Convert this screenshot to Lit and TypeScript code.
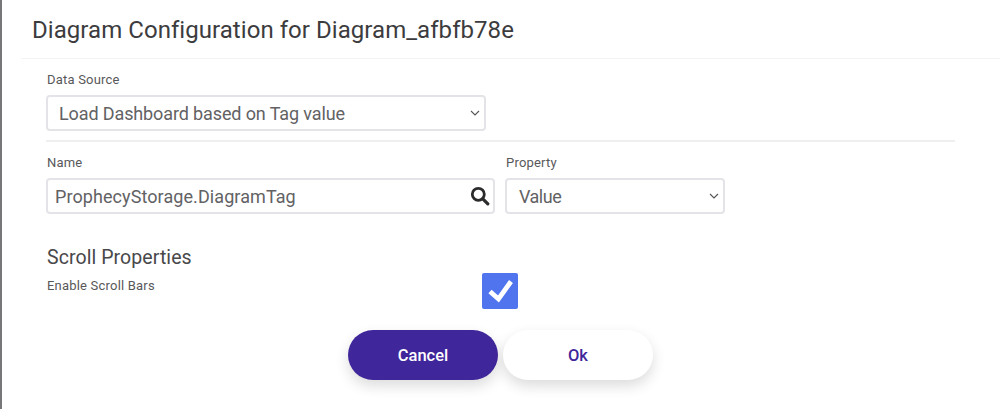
import { LitElement, html, css } from "lit";
import { customElement } from "lit/decorators.js";

const chevron = html`<svg class="chev" width="10" height="6" viewBox="0 0 10 6"><path d="M1 1l4 4 4-4" fill="none" stroke="#555" stroke-width="1.1"/></svg>`;

@customElement("app-root")
export class AppRoot extends LitElement {
  static styles = css`
    :host { display: block; width: 1000px; height: 409px; overflow: hidden; background: #fff; font-family: Roboto, "Liberation Sans", sans-serif; color: #4a4a4a; }
    .dialog { box-sizing: border-box; height: 409px; border-left: 2px solid #77777a; display: flex; flex-direction: column; }
    .head { margin-left: 19px; height: 59px; box-sizing: border-box; border-bottom: 1px solid #f4f4f5; padding: 14px 0 0 11px; }
    h1 { margin: 0; font-size: 24px; line-height: 32px; font-weight: 400; color: #3c3c3e; letter-spacing: 0.05px; }
    .body { padding: 0 45px 0 44px; display: flex; flex-direction: column; }
    .label { font-size: 13px; line-height: 16px; color: #58585a; letter-spacing: 0.2px; padding-left: 1px; }
    .field { box-sizing: border-box; height: 36px; border: 2px solid #e4e4e8; border-radius: 4px; display: flex; align-items: center; justify-content: space-between; font-size: 18px; color: #626264; background: #fff; }
    .source { margin-top: 13px; }
    .source .label { margin-bottom: 7px; }
    .source .field { width: 440px; padding: 0 4px 0 11px; letter-spacing: -0.12px; }
    .rule { height: 2px; background: #efeff1; width: 909px; margin-top: 9px; }
    .row { display: flex; gap: 10px; margin-top: 13px; }
    .row .label { margin-bottom: 7px; }
    .name { width: 449px; padding: 0 3px 0 7px; letter-spacing: 0.08px; }
    .prop { width: 220px; padding: 0 4px 0 12px; letter-spacing: -0.5px; }
    h2 { margin: 31px 0 0 1px; font-size: 19.5px; line-height: 26px; font-weight: 400; color: #48484a; letter-spacing: 0.08px; }
    .scroll { display: flex; height: 36px; margin-top: 6px; }
    .scroll .label { width: 435px; margin-top: 1px; }
    .check { width: 36px; height: 36px; border-radius: 2px; background: #4f74ee; display: flex; align-items: center; justify-content: center; margin-top: -4px; }
    .actions { display: flex; gap: 5px; justify-content: center; margin: 17px 0 0 -46px; width: 1000px; padding-left: 1px; box-sizing: border-box; }
    button { width: 150px; height: 50px; border: 0; border-radius: 25px; font: 500 16.5px Roboto, "Liberation Sans", sans-serif; box-shadow: 0 6px 14px rgba(0,0,0,0.14); }
    .cancel { background: #40269b; color: #fff; }
    .ok { background: #fff; color: #40269b; }
  `;

  render() {
    return html`<div class="dialog">
      <div class="head"><h1>Diagram Configuration for Diagram_afbfb78e</h1></div>
      <div class="body">
        <div class="source">
          <div class="label">Data Source</div>
          <div class="field"><span>Load Dashboard based on Tag value</span>${chevron}</div>
        </div>
        <div class="rule"></div>
        <div class="row">
          <div>
            <div class="label">Name</div>
            <div class="field name"><span>ProphecyStorage.DiagramTag</span>
              <svg width="20" height="20" viewBox="0 0 20 20"><circle cx="8.3" cy="8.3" r="6" fill="none" stroke="#2b2b2b" stroke-width="2.8"/><path d="M12.8 12.8l5 5" stroke="#2b2b2b" stroke-width="3.2" stroke-linecap="round"/></svg>
            </div>
          </div>
          <div>
            <div class="label">Property</div>
            <div class="field prop"><span>Value</span>${chevron}</div>
          </div>
        </div>
        <h2>Scroll Properties</h2>
        <div class="scroll">
          <div class="label">Enable Scroll Bars</div>
          <div class="check"><svg width="26" height="24" viewBox="0 0 26 24"><path d="M3 12.5l8.5 7.5L24 2.5" fill="none" stroke="#fff" stroke-width="4.8"/></svg></div>
        </div>
        <div class="actions"><button class="cancel">Cancel</button><button class="ok">Ok</button></div>
      </div>
    </div>`;
  }
}
